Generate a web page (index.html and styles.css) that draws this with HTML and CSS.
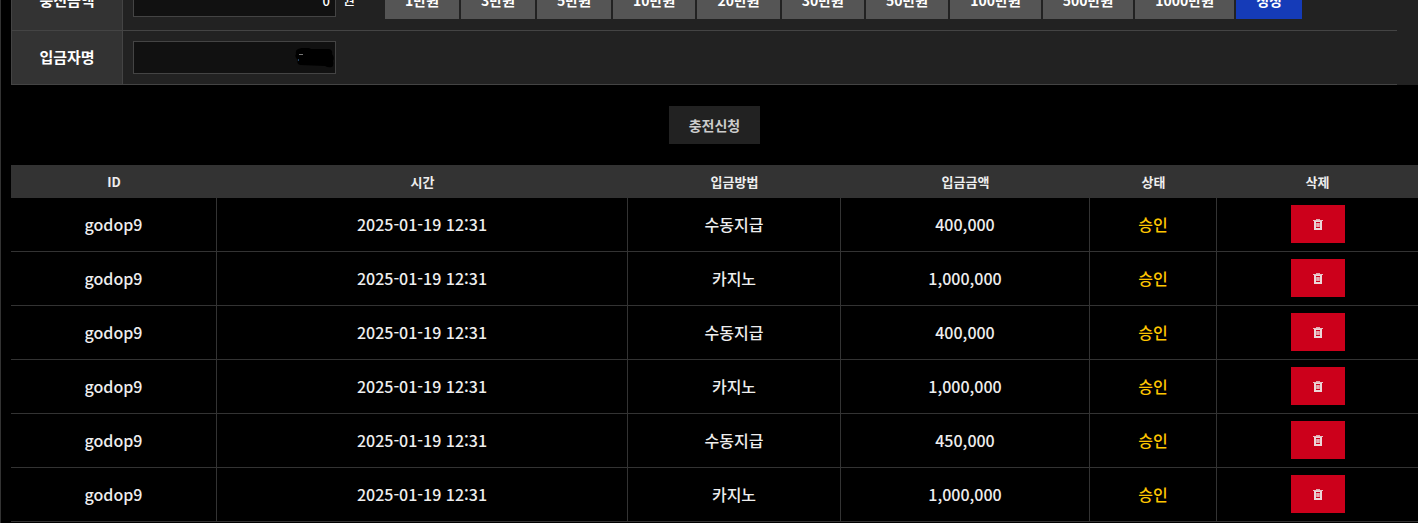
FILE: index.html
```
<!DOCTYPE html>
<html lang="ko">
<head>
    <meta charset="UTF-8">
    <meta name="viewport" content="width=device-width, initial-scale=1.0">
    <title>충전신청</title>
    <link rel="stylesheet" href="styles.css">
</head>
<body>
    <svg class="sprite" aria-hidden="true">
        <symbol id="trash" viewBox="0 0 10 11">
            <path d="M3 1V0h4v1z" fill="currentColor" opacity=".7"/>
            <path d="M0 1h10v1H0z" fill="currentColor" opacity=".8"/>
            <path d="M1 2h8v9H1zM3 3v1h4V3zM3 8v1h4V8z" fill="currentColor" fill-rule="evenodd" opacity=".9"/>
            <path d="M3 4h1v4H3zM6 4h1v4H6z" fill="#cc001b" opacity=".35"/>
            <path d="M4 4h2v4H4z" fill="#cc001b" opacity=".2"/>
        </symbol>
    </svg>

    <main class="page">
        <form class="charge-form">
            <div class="form-box">
                <div class="form-rows">
                    <div class="form-row amount-row">
                        <label class="form-label" for="amount">충전금액</label>
                        <div class="form-field">
                            <input class="text-input" type="text" id="amount" value="0">
                            <span class="unit">원</span>
                            <div class="amount-btns">
                                <button type="button" class="amount-btn">1만원</button>
                                <button type="button" class="amount-btn">3만원</button>
                                <button type="button" class="amount-btn">5만원</button>
                                <button type="button" class="amount-btn">10만원</button>
                                <button type="button" class="amount-btn">20만원</button>
                                <button type="button" class="amount-btn">30만원</button>
                                <button type="button" class="amount-btn">50만원</button>
                                <button type="button" class="amount-btn">100만원</button>
                                <button type="button" class="amount-btn">500만원</button>
                                <button type="button" class="amount-btn">1000만원</button>
                                <button type="button" class="amount-btn reset-btn">정정</button>
                            </div>
                        </div>
                    </div>
                    <div class="form-row">
                        <label class="form-label" for="depositor">입금자명</label>
                        <div class="form-field">
                            <div class="name-box">
                                <input class="text-input" type="text" id="depositor">
                                <svg class="name-mask" viewBox="0 0 40 20" aria-hidden="true">
                                    <path d="M3 1Q8-1 14 0L16 1H34Q38 2 37 6Q40 9 38 13Q39 17 37 19Q33 20 30 18L5 17Q1 16 3 12Q-1 9 1 6Q0 2 3 1Z"/>
                                    <path d="M4 6.5h4" stroke="#777"/>
                                    <path d="M3.5 11v2" stroke="#246"/>
                                </svg>
                            </div>
                        </div>
                    </div>
                </div>
            </div>
            <button type="submit" class="submit-btn">충전신청</button>
        </form>

        <table class="history">
            <colgroup>
                <col class="col-id">
                <col class="col-time">
                <col class="col-method">
                <col class="col-amount">
                <col class="col-status">
                <col class="col-delete">
            </colgroup>
            <thead>
                <tr>
                    <th>ID</th>
                    <th>시간</th>
                    <th>입금방법</th>
                    <th>입금금액</th>
                    <th>상태</th>
                    <th>삭제</th>
                </tr>
            </thead>
            <tbody>
                <tr>
                    <td>godop9</td>
                    <td>2025-01-19 12:31</td>
                    <td>수동지급</td>
                    <td>400,000</td>
                    <td class="status">승인</td>
                    <td><button type="button" class="delete-btn" aria-label="삭제"><svg class="icon"><use href="#trash"/></svg></button></td>
                </tr>
                <tr>
                    <td>godop9</td>
                    <td>2025-01-19 12:31</td>
                    <td>카지노</td>
                    <td>1,000,000</td>
                    <td class="status">승인</td>
                    <td><button type="button" class="delete-btn" aria-label="삭제"><svg class="icon"><use href="#trash"/></svg></button></td>
                </tr>
                <tr>
                    <td>godop9</td>
                    <td>2025-01-19 12:31</td>
                    <td>수동지급</td>
                    <td>400,000</td>
                    <td class="status">승인</td>
                    <td><button type="button" class="delete-btn" aria-label="삭제"><svg class="icon"><use href="#trash"/></svg></button></td>
                </tr>
                <tr>
                    <td>godop9</td>
                    <td>2025-01-19 12:31</td>
                    <td>카지노</td>
                    <td>1,000,000</td>
                    <td class="status">승인</td>
                    <td><button type="button" class="delete-btn" aria-label="삭제"><svg class="icon"><use href="#trash"/></svg></button></td>
                </tr>
                <tr>
                    <td>godop9</td>
                    <td>2025-01-19 12:31</td>
                    <td>수동지급</td>
                    <td>450,000</td>
                    <td class="status">승인</td>
                    <td><button type="button" class="delete-btn" aria-label="삭제"><svg class="icon"><use href="#trash"/></svg></button></td>
                </tr>
                <tr>
                    <td>godop9</td>
                    <td>2025-01-19 12:31</td>
                    <td>카지노</td>
                    <td>1,000,000</td>
                    <td class="status">승인</td>
                    <td><button type="button" class="delete-btn" aria-label="삭제"><svg class="icon"><use href="#trash"/></svg></button></td>
                </tr>
            </tbody>
        </table>
    </main>
</body>
</html>
```

FILE: styles.css
```
* {
    box-sizing: border-box;
}
body {
    margin: 0;
    background-color: #000;
    color: #eee;
    font-family: "Noto Sans CJK KR", sans-serif;
    font-size: 16px;
    font-weight: 500;
    overflow: hidden;
}
button, input {
    font-family: inherit;
    margin: 0;
}
button {
    border: none;
    cursor: pointer;
}
.sprite {
    display: none;
}
.page {
    margin-top: -30px;
    min-height: calc(100vh + 30px);
    padding-left: 10px;
    border-left: 1px solid #333;
}

/* charge form */
.charge-form {
    display: flex;
    flex-direction: column;
    align-items: center;
    padding-bottom: 21px;
}
.form-box {
    width: 100%;
    padding-right: 21px;
    margin-bottom: 21px;
    background-color: #222;
}
.form-rows {
    border-left: 1px solid #444;
}
.form-row {
    display: flex;
    border-bottom: 1px solid #444;
}
.amount-row {
    height: 61px;
}
.form-label {
    display: flex;
    flex: none;
    align-items: center;
    justify-content: center;
    width: 111px;
    padding-bottom: 2px;
    border-right: 1px solid #444;
    background-color: #333;
    color: #fff;
    font-size: 15px;
    font-weight: 700;
}
.form-field {
    display: flex;
    align-items: center;
    padding: 10px;
}
.text-input {
    display: block;
    width: 203px;
    height: 33px;
    padding: 0 5px;
    border: 1px solid #444;
    background-color: #111;
    color: #fff;
    font-size: 13px;
    font-weight: 500;
    text-align: right;
}
.unit {
    width: 42px;
    margin-left: 7px;
    padding-bottom: 4px;
    color: #fff;
    font-size: 13px;
}
.amount-btns {
    display: flex;
    gap: 2px;
}
.amount-btn {
    height: 38px;
    padding: 0 20px;
    background-color: #555;
    color: #fff;
    font-size: 14px;
    font-weight: 700;
    white-space: nowrap;
}
.reset-btn {
    background-color: #153bb8;
}
.name-box {
    position: relative;
}
.name-mask {
    position: absolute;
    top: 7px;
    right: 1px;
    width: 40px;
    height: 20px;
}
.submit-btn {
    height: 38px;
    padding: 0 20px;
    background-color: #222;
    color: #ccc;
    font-size: 14px;
    font-weight: 700;
}

/* history table */
.history {
    width: 100%;
    table-layout: fixed;
    border-collapse: separate;
    border-spacing: 0;
    text-align: center;
}
.col-id { width: 206px; }
.col-time { width: 411px; }
.col-method { width: 213px; }
.col-amount { width: 249px; }
.col-status { width: 127px; }
.col-delete { width: 201px; }
.history th {
    height: 33px;
    padding: 0;
    background-color: #333;
    font-size: 13px;
    font-weight: 700;
}
.history td {
    height: 54px;
    padding: 7px 0 8px;
    border-right: 1px solid #333;
    border-bottom: 1px solid #333;
    line-height: 24px;
}
.history td:last-child {
    border-right: none;
}
.history .status {
    color: #ffc600;
}
.delete-btn {
    display: block;
    width: 54px;
    height: 38px;
    margin: 0 auto;
    padding: 1px 0 0;
    background-color: #cc001b;
    color: #eee;
}
.icon {
    display: block;
    width: 10px;
    height: 11px;
    margin: 0 auto;
}
```
